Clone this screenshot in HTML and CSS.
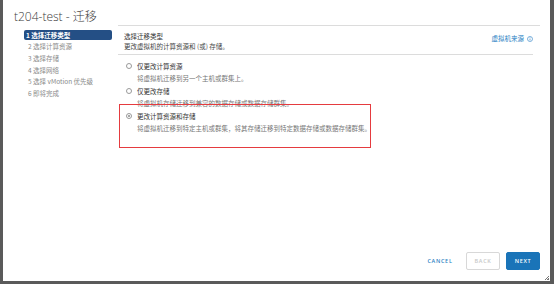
FILE: index.html
```html
<!DOCTYPE html>
<html lang="zh-CN">
<head>
<meta charset="utf-8">
<title>t204-test - 迁移</title>
<link rel="stylesheet" href="styles.css">
</head>
<body>
<div class="screen">
  <div class="dialog">
    <h1 class="title">t204-test - 迁移</h1>
    <div class="main">
      <nav class="steps">
        <div class="step active">1 选择迁移类型</div>
        <div class="step">2 选择计算资源</div>
        <div class="step">3 选择存储</div>
        <div class="step">4 选择网络</div>
        <div class="step">5 选择 vMotion 优先级</div>
        <div class="step">6 即将完成</div>
      </nav>
      <section class="content">
        <div class="head">
          <div class="head-text">
            <div class="step-title">选择迁移类型</div>
            <div class="step-sub">更改虚拟机的计算资源和 (或) 存储。</div>
          </div>
          <a class="link">虚拟机来源 <svg class="info" viewBox="0 0 10 10" width="6" height="6"><circle cx="5" cy="5" r="4.2" fill="none" stroke="#2a7fc4" stroke-width="1"/><line x1="5" y1="4.2" x2="5" y2="7.4" stroke="#2a7fc4" stroke-width="1.1"/><circle cx="5" cy="2.8" r="0.7" fill="#2a7fc4"/></svg></a>
        </div>
        <div class="options">
          <div class="option">
            <div class="opt-row"><span class="radio"></span><span class="opt-label">仅更改计算资源</span></div>
            <div class="opt-desc">将虚拟机迁移到另一个主机或群集上。</div>
          </div>
          <div class="option">
            <div class="opt-row"><span class="radio"></span><span class="opt-label">仅更改存储</span></div>
            <div class="opt-desc">将虚拟机存储迁移到兼容的数据存储或数据存储群集。</div>
          </div>
          <div class="option">
            <div class="opt-row"><span class="radio checked"></span><span class="opt-label">更改计算资源和存储</span></div>
            <div class="opt-desc">将虚拟机迁移到特定主机或群集，将其存储迁移到特定数据存储或数据存储群集。</div>
          </div>
        </div>
      </section>
    </div>
    <div class="footer">
      <button class="btn btn-link">CANCEL</button>
      <button class="btn btn-outline" disabled>BACK</button>
      <button class="btn btn-primary">NEXT</button>
    </div>
    <div class="annotation"></div>
    <div class="grip"></div>
  </div>
</div>
</body>
</html>
```
FILE: styles.css
```css
* { box-sizing: border-box; }
html, body { margin: 0; padding: 0; }
body {
  width: 554px;
  height: 284px;
  overflow: hidden;
  font-family: "Noto Sans CJK SC", "Noto Sans", sans-serif;
}
.screen {
  width: 554px;
  height: 284px;
  background: #5a5a5a;
  padding: 0 4px 3px 3px;
}
.dialog {
  position: relative;
  background: #fff;
  width: 547px;
  height: 281px;
  display: flex;
  flex-direction: column;
  padding: 10px 10px 11px 11px;
}
.title {
  margin: 0 0 1px 0;
  font-family: "Open Sans", "Noto Sans CJK SC", sans-serif;
  font-weight: 300;
  font-size: 12px;
  line-height: 14px;
  color: #3a3a3a;
}
.main {
  display: flex;
  flex: 1;
}
.steps {
  width: 88px;
  margin: 5px 6px 0 10px;
  font-size: 6.5px;
}
.step {
  height: 11.7px;
  line-height: 11.7px;
  padding-left: 4px;
  color: #8a8a8a;
  white-space: nowrap;
}
.step.active {
  height: 10px;
  line-height: 10px;
  margin-bottom: 1.2px;
  padding-left: 2px;
  background: #244f85;
  color: #fff;
  font-weight: 700;
  border-radius: 2px;
}
.content {
  flex: 1;
  border-top: 1px solid #dcdcdc;
}
.head {
  display: flex;
  justify-content: space-between;
  margin-right: 7px;
  padding: 6px 0 3px 6px;
  border-bottom: 1px solid #dcdcdc;
  font-size: 6.5px;
  line-height: 9.5px;
}
.step-title { color: #333; }
.step-sub { color: #444; }
.link {
  color: #2a7fc4;
  margin-top: 2px;
  display: flex;
  align-items: center;
  gap: 3px;
  height: 9.5px;
}
.info { display: block; }
.options {
  padding: 6.5px 0 0 8px;
  font-size: 6.5px;
  line-height: 9.5px;
}
.option { margin-bottom: 3px; }
.opt-row {
  display: flex;
  align-items: center;
  gap: 5px;
}
.radio {
  width: 6px;
  height: 6px;
  border: 1px solid #9a9a9a;
  border-radius: 50%;
  background: #fff;
  position: relative;
}
.radio.checked::after {
  content: "";
  position: absolute;
  left: 1px;
  top: 1px;
  width: 2px;
  height: 2px;
  border-radius: 50%;
  background: #8a8a8a;
}
.opt-label { color: #333; }
.opt-desc {
  margin-top: 3px;
  padding-left: 11px;
  color: #777;
  white-space: nowrap;
}
.footer {
  display: flex;
  justify-content: flex-end;
  align-items: center;
  gap: 6px;
}
.btn {
  height: 18px;
  width: 34px;
  padding: 0;
  border-radius: 2px;
  font-family: "Open Sans", sans-serif;
  font-weight: 600;
  font-size: 5.5px;
  letter-spacing: 0.7px;
  border: 1px solid transparent;
  background: transparent;
}
.btn-link {
  width: 38px;
  margin-right: 1px;
  color: #2a7fc4;
}
.btn-outline {
  border-color: #d8d8d8;
  color: #c8c8c8;
  background: #fff;
}
.btn-primary {
  background: #1a74b8;
  border-color: #1a74b8;
  color: #fff;
}
.annotation {
  position: absolute;
  left: 116px;
  top: 104px;
  width: 252px;
  height: 44px;
  border: 1.5px solid #e53b3f;
}
.grip {
  position: absolute;
  right: 1px;
  bottom: 1px;
  width: 4px;
  height: 4px;
  background: linear-gradient(135deg, transparent 45%, #777 45%, #777 60%, transparent 60%, transparent 75%, #777 75%);
}
```
